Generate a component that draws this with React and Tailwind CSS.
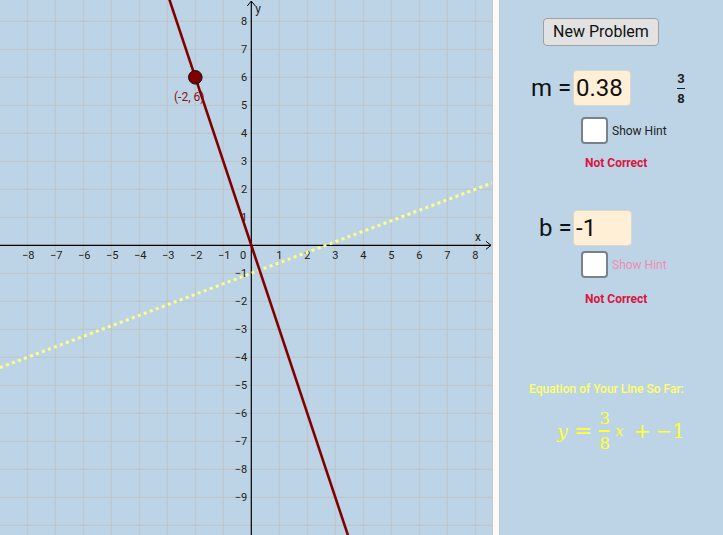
import React from 'react'

const O = { x: 251.3, y: 245.3 }
const U = 28
const W = 492
const H = 535

const px = (x) => O.x + x * U
const py = (y) => O.y - y * U

const xs = [-8, -7, -6, -5, -4, -3, -2, -1, 1, 2, 3, 4, 5, 6, 7, 8]
const ys = [8, 7, 6, 5, 4, 3, 2, 1, -1, -2, -3, -4, -5, -6, -7, -8, -9, -10]

const num = (n) => (n < 0 ? '\u2212' + Math.abs(n) : String(n))

function Graph() {
  // user line y = -3x, guess line y = 3/8 x - 1
  const xl = -O.x / U
  const xr = (W - O.x) / U
  return (
    <svg width={W} height={H} className="block">
      <rect width={W} height={H} fill="#bdd4e6" />
      {xs.map((k) => (
        <line key={'vx' + k} x1={px(k)} x2={px(k)} y1={0} y2={H} stroke="#bfc3c8" strokeWidth="1" />
      ))}
      {ys.map((k) => (
        <line key={'hy' + k} x1={0} x2={W} y1={py(k)} y2={py(k)} stroke="#bfc3c8" strokeWidth="1" />
      ))}
      {/* axes */}
      <line x1={0} x2={W - 1} y1={O.y} y2={O.y} stroke="#000" strokeWidth="1.2" />
      <line x1={O.x} x2={O.x} y1={1} y2={H} stroke="#000" strokeWidth="1.2" />
      <path d={`M${W - 6} ${O.y - 4} L${W - 1} ${O.y} L${W - 6} ${O.y + 4}`} fill="none" stroke="#000" strokeWidth="1" />
      <path d={`M${O.x - 4} 6 L${O.x} 1 L${O.x + 4} 6`} fill="none" stroke="#000" strokeWidth="1" />
      <g fontFamily="Roboto, 'Liberation Sans', sans-serif" fontSize="11" fill="#222">
        {xs.map((k) => (
          <text key={'tx' + k} x={px(k) + (k < 0 ? 1 : 0)} y={O.y + 14} textAnchor="middle">{num(k)}</text>
        ))}
        <text x={O.x - 5} y={O.y + 14} textAnchor="end">0</text>
        {ys.filter((k) => k !== -10).map((k) => (
          <text key={'ty' + k} x={O.x - 4} y={py(k) + 4} textAnchor="end">{num(k)}</text>
        ))}
        <text x={475} y={O.y - 4} fontSize="12">x</text>
        <text x={O.x + 4} y={13} fontSize="12">y</text>
      </g>
      {/* guess line */}
      <line x1={0} y1={py(0.375 * xl - 1)} x2={W} y2={py(0.375 * xr - 1)} stroke="#ffff80" strokeWidth="3" strokeDasharray="3 3.4" />
      {/* user line */}
      <line x1={px(8.9 / 3 * -1)} y1={py(8.9)} x2={px(10.6 / 3)} y2={py(-10.6)} stroke="#800000" strokeWidth="2.6" />
      <circle cx={px(-2)} cy={py(6)} r="6.8" fill="#800000" stroke="#111" strokeWidth="1" />
      <text x={174} y={101} fontFamily="Roboto, 'Liberation Sans', sans-serif" fontSize="12" fill="#8b1010">(-2, 6)</text>
    </svg>
  )
}

function Check({ label, muted }) {
  return (
    <div className="flex items-center ml-[81px]">
      <div className="w-[27px] h-[27px] bg-white border-2 border-[#78828c] rounded-[4px]" />
      <span className={'ml-[4px] text-[12px] ' + (muted ? 'text-[#f08cb4]' : 'text-[#222]')}>{label}</span>
    </div>
  )
}

export default function App() {
  return (
    <div className="flex w-[723px] h-[535px] overflow-hidden bg-[#bdd4e6]" style={{ fontFamily: "Roboto, 'Liberation Sans', sans-serif" }}>
      <div className="w-[492px] h-[535px] shrink-0">
        <Graph />
      </div>
      <div className="w-[8px] h-full shrink-0 bg-[#fafafa] border-l border-r border-[#c8c8c8]" />
      <div className="flex-1 flex flex-col">
        <button className="mt-[18px] ml-[43px] w-[116px] h-[28px] bg-[#e2e2e2] border border-[#a0a0a0] rounded-[4px] text-[16px] text-[#111] leading-none">
          New Problem
        </button>

        <div className="mt-[24px] flex items-center">
          <span className="ml-[31px] w-[42px] text-[24px] text-[#111] leading-none">m =</span>
          <div className="w-[58px] h-[36px] bg-[#ffefd6] border border-[#dcd6cc] rounded-[4px] flex items-center pl-[2px] text-[24px] text-[#111]">0.38</div>
          <div className="ml-[46px] flex flex-col items-center text-[13px] font-bold text-[#222] leading-none">
            <span>3</span>
            <span className="w-[8px] h-px bg-[#222] my-[3px]" />
            <span>8</span>
          </div>
        </div>

        <div className="mt-[11px]">
          <Check label="Show Hint" />
        </div>
        <div className="mt-[10px] ml-[85px] text-[12px] font-bold text-[#dc143c]">Not Correct</div>

        <div className="mt-[38px] flex items-center">
          <span className="ml-[39px] w-[34px] text-[24px] text-[#111] leading-none">b =</span>
          <div className="w-[59px] h-[36px] bg-[#ffefd6] border border-[#dcd6cc] rounded-[4px] flex items-center pl-[2px] text-[24px] text-[#111]">-1</div>
        </div>

        <div className="mt-[5px]">
          <Check label="Show Hint" muted />
        </div>
        <div className="mt-[12px] ml-[85px] text-[12px] font-bold text-[#dc143c]">Not Correct</div>

        <div className="mt-[72px] ml-[29px] text-[12px] font-medium text-[#ffff66]">Equation of Your Line So Far:</div>

        <div className="mt-[12px] ml-[57px] flex items-center text-[#ffff33]" style={{ fontFamily: "'DejaVu Serif', 'Liberation Serif', serif" }}>
          <span className="italic text-[19px]">y</span>
          <span className="ml-[6px] text-[22px] leading-none">=</span>
          <div className="ml-[7px] flex flex-col items-center text-[17px] leading-none">
            <span>3</span>
            <span className="w-[11px] h-[1.5px] bg-[#ffff33] my-[3px]" />
            <span>8</span>
          </div>
          <span className="ml-[5px] italic text-[15px]">x</span>
          <span className="ml-[10px] text-[20px]">+</span>
          <span className="ml-[5px] text-[20px]">−1</span>
        </div>
      </div>
    </div>
  )
}
